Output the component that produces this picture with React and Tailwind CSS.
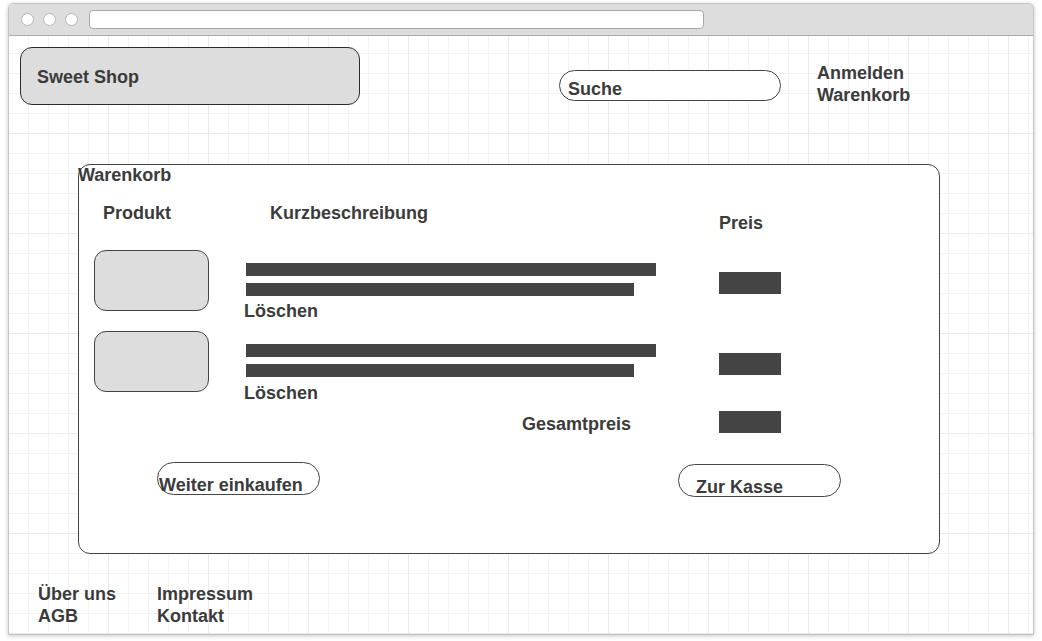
const ink = "text-[#3b3b3b]"

function Bar({ w }) {
  return <div className={`h-[13px] bg-[#444444] ${w}`} />
}

function CartRow({ first }) {
  return (
    <div className={`flex items-start pl-[15px] ${first ? "mt-[16px]" : "mt-[9px]"}`}>
      <div className="w-[115px] h-[61px] shrink-0 rounded-[12px] bg-[#dddddd] border border-[#444444]" />
      <div className="w-[475px] ml-[35px] flex flex-col">
        <div className="mt-[13px] ml-[2px]">
          <Bar w="w-[410px]" />
          <div className="mt-[7px]"><Bar w="w-[388px]" /></div>
        </div>
        <div className={`${first ? "mt-[4px]" : "mt-[5px]"} leading-[22px]`}>Löschen</div>
      </div>
      <div className="mt-[22px] w-[62px] h-[22px] bg-[#444444]" />
    </div>
  )
}

export default function App() {
  return (
    <div
      className={`w-[1042px] h-[641px] overflow-hidden bg-white font-bold text-[18px] ${ink}`}
      style={{ fontFamily: '"Liberation Sans", Arial, sans-serif' }}
    >
      <div className="ml-[8px] mt-[3px] w-[1026px] h-[632px] flex flex-col border border-[#c4c4c4] rounded-t-[5px] shadow-[0_1px_4px_rgba(0,0,0,0.22)] bg-white">
        {/* browser chrome */}
        <div className="h-[32px] shrink-0 flex items-center pl-[12px] bg-[#dddddd] border-b border-[#ababab] rounded-t-[4px]">
          <div className="flex gap-[9px]">
            <span className="w-[13px] h-[13px] rounded-full bg-white border border-[#b5b5b5]" />
            <span className="w-[13px] h-[13px] rounded-full bg-white border border-[#b5b5b5]" />
            <span className="w-[13px] h-[13px] rounded-full bg-white border border-[#b5b5b5]" />
          </div>
          <div className="ml-[11px] w-[615px] h-[19px] bg-white border border-[#a8a8a8] rounded-[4px]" />
        </div>

        {/* canvas */}
        <div className="flex-1 bg-white bg-[linear-gradient(to_right,#e9e9e9_1px,transparent_1px),linear-gradient(to_bottom,#e9e9e9_1px,transparent_1px),linear-gradient(to_right,#f3f3f3_1px,transparent_1px),linear-gradient(to_bottom,#f3f3f3_1px,transparent_1px)] bg-[size:100px_100px,100px_100px,20px_20px,20px_20px] bg-[position:99px_97px,99px_97px,19px_17px,19px_17px]">
          {/* header */}
          <div className="flex items-start pl-[11px] pt-[11px]">
            <div className="w-[340px] h-[58px] flex items-center pl-[16px] pt-[2px] bg-[#dddddd] border border-[#2b2b2b] rounded-[12px]">
              Sweet Shop
            </div>
            <div className="ml-[199px] mt-[23px] w-[222px] h-[31px] pl-[8px] pt-[7px] leading-[22px] bg-white border border-[#444444] rounded-full">
              Suche
            </div>
            <div className="ml-[36px] mt-[15px] leading-[22px]">
              <div>Anmelden</div>
              <div>Warenkorb</div>
            </div>
          </div>

          {/* cart */}
          <div className="ml-[69px] mt-[58px] w-[862px] h-[390px] flex flex-col bg-white border border-[#444444] rounded-[12px]">
            <div className="-ml-[1px] -mt-[1px] leading-[22px]">Warenkorb</div>

            <div className="mt-[16px] flex items-start pl-[24px] leading-[22px]">
              <div className="w-[167px]">Produkt</div>
              <div className="w-[449px]">Kurzbeschreibung</div>
              <div className="mt-[10px]">Preis</div>
            </div>

            <CartRow first />
            <CartRow />

            <div className="mt-[8px] flex items-start leading-[22px]">
              <div className="w-[640px] pl-[443px] pt-[1px]">Gesamtpreis</div>
              <div className="-mt-[1px] w-[62px] h-[22px] bg-[#444444]" />
            </div>

            <div className="mt-[27px] flex items-start pl-[78px] leading-[22px]">
              <div className="w-[163px] h-[33px] pl-[1px] pt-[11px] whitespace-nowrap border border-[#444444] rounded-full">
                Weiter einkaufen
              </div>
              <div className="ml-[358px] mt-[2px] w-[163px] h-[33px] pl-[17px] pt-[11px] whitespace-nowrap border border-[#444444] rounded-full">
                Zur Kasse
              </div>
            </div>
          </div>

          {/* footer */}
          <div className="mt-[29px] flex items-start pl-[29px] leading-[22px]">
            <div className="w-[119px]">
              <div>Über uns</div>
              <div>AGB</div>
            </div>
            <div>
              <div>Impressum</div>
              <div>Kontakt</div>
            </div>
          </div>
        </div>
      </div>
    </div>
  )
}
